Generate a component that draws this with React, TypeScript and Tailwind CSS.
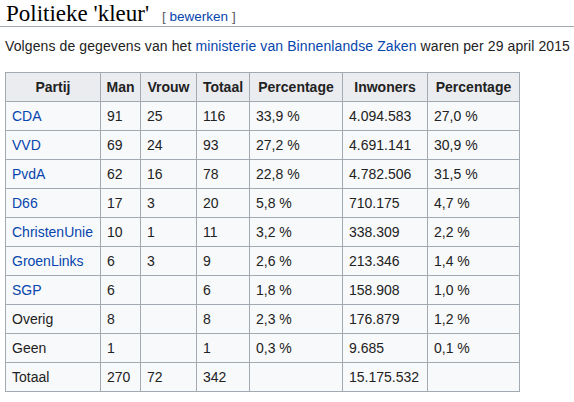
import React from 'react';

type Row = {
  partij: string;
  link: boolean;
  man: string;
  vrouw: string;
  totaal: string;
  pct: string;
  inwoners: string;
  pct2: string;
};

const rows: Row[] = [
  { partij: 'CDA', link: true, man: '91', vrouw: '25', totaal: '116', pct: '33,9 %', inwoners: '4.094.583', pct2: '27,0 %' },
  { partij: 'VVD', link: true, man: '69', vrouw: '24', totaal: '93', pct: '27,2 %', inwoners: '4.691.141', pct2: '30,9 %' },
  { partij: 'PvdA', link: true, man: '62', vrouw: '16', totaal: '78', pct: '22,8 %', inwoners: '4.782.506', pct2: '31,5 %' },
  { partij: 'D66', link: true, man: '17', vrouw: '3', totaal: '20', pct: '5,8 %', inwoners: '710.175', pct2: '4,7 %' },
  { partij: 'ChristenUnie', link: true, man: '10', vrouw: '1', totaal: '11', pct: '3,2 %', inwoners: '338.309', pct2: '2,2 %' },
  { partij: 'GroenLinks', link: true, man: '6', vrouw: '3', totaal: '9', pct: '2,6 %', inwoners: '213.346', pct2: '1,4 %' },
  { partij: 'SGP', link: true, man: '6', vrouw: '', totaal: '6', pct: '1,8 %', inwoners: '158.908', pct2: '1,0 %' },
  { partij: 'Overig', link: false, man: '8', vrouw: '', totaal: '8', pct: '2,3 %', inwoners: '176.879', pct2: '1,2 %' },
  { partij: 'Geen', link: false, man: '1', vrouw: '', totaal: '1', pct: '0,3 %', inwoners: '9.685', pct2: '0,1 %' },
  { partij: 'Totaal', link: false, man: '270', vrouw: '72', totaal: '342', pct: '', inwoners: '15.175.532', pct2: '' },
];

const th = 'border border-[#a2a9b1] bg-[#eaecf0] font-bold text-center h-[29px] p-0';
const td = 'border border-[#a2a9b1] h-[29px] py-0 pl-[6px] pr-1 text-left';

export default function App() {
  return (
    <div className="bg-white w-[574px] h-[402px] text-[#222222] font-['Liberation_Sans',Arial,sans-serif] text-[14px]">
      <div className="flex items-baseline pl-[6px] pt-[1px] h-[27px] border-b border-[#a2a9b1]">
        <h2 className="font-['Liberation_Serif','Times_New_Roman',serif] text-[23px] leading-[25px] text-black">
          Politieke 'kleur'
        </h2>
        <span className="ml-[13px] text-[13.5px] text-[#54595d]">
          [ <span className="text-[#0645ad]">bewerken</span> ]
        </span>
      </div>
      <p className="pl-[5px] pt-[11px] leading-[16px] tracking-[0.1px]">
        Volgens de gegevens van het{' '}
        <span className="text-[#0645ad]">ministerie van Binnenlandse Zaken</span> waren per 29 april 2015
      </p>
      <table className="ml-[5px] mt-[18px] border-collapse bg-[#f8f9fa] leading-[16px]">
        <colgroup>
          <col className="w-[95px]" />
          <col className="w-[40px]" />
          <col className="w-[56px]" />
          <col className="w-[53px]" />
          <col className="w-[93px]" />
          <col className="w-[85px]" />
          <col className="w-[92px]" />
        </colgroup>
        <thead>
          <tr>
            <th className={th}>Partij</th>
            <th className={th}>Man</th>
            <th className={th}>Vrouw</th>
            <th className={th}>Totaal</th>
            <th className={th}>Percentage</th>
            <th className={th}>Inwoners</th>
            <th className={th}>Percentage</th>
          </tr>
        </thead>
        <tbody>
          {rows.map((r) => (
            <tr key={r.partij}>
              <td className={td}>
                {r.link ? <span className="text-[#0645ad]">{r.partij}</span> : r.partij}
              </td>
              <td className={td}>{r.man}</td>
              <td className={td}>{r.vrouw}</td>
              <td className={td}>{r.totaal}</td>
              <td className={td}>{r.pct}</td>
              <td className={td}>{r.inwoners}</td>
              <td className={td}>{r.pct2}</td>
            </tr>
          ))}
        </tbody>
      </table>
    </div>
  );
}
